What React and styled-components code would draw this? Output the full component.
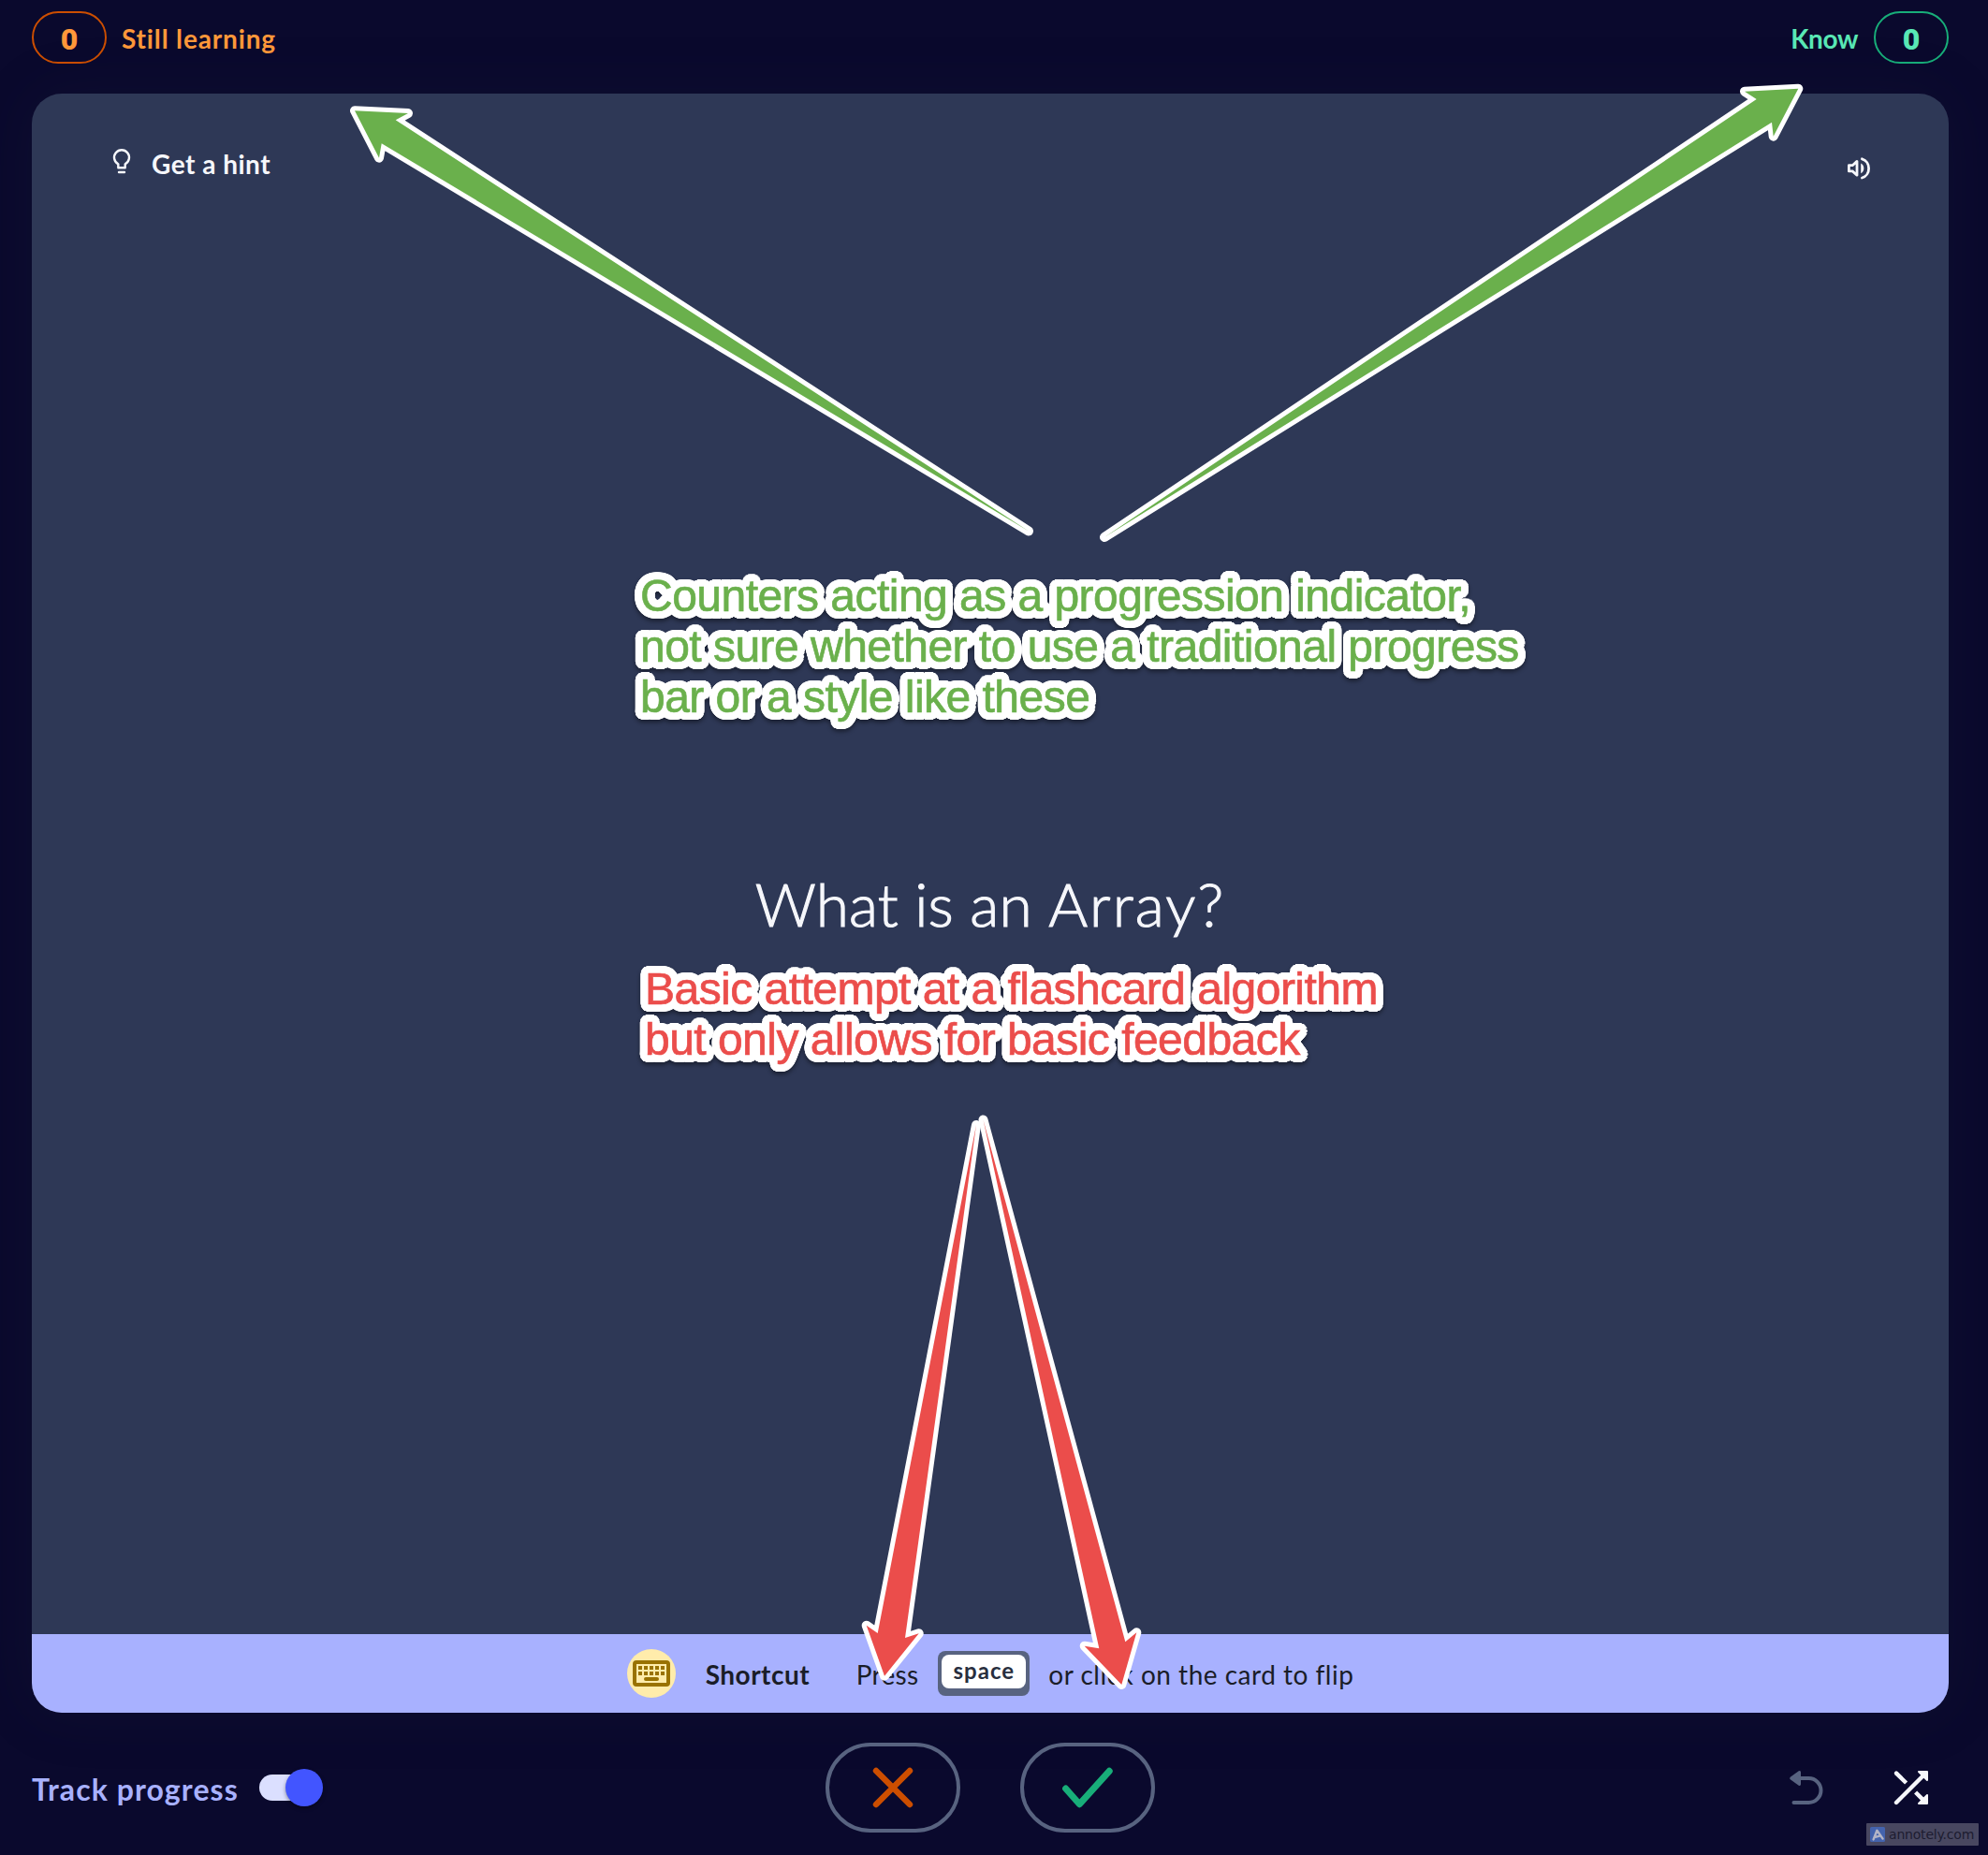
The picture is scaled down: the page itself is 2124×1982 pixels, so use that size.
import React from "react";
import styled, { createGlobalStyle } from "styled-components";

const color = {
  page: "#0a092d",
  card: "#2e3856",
  bar: "#a8b1ff",
  ink: "#1a1d28",
  white: "#f6f7fb",
  gray: "#586380",
  orange: "#ff983a",
  orangeDark: "#cc4e00",
  mint: "#59e8b5",
  green: "#18ae79",
  indigo: "#4255ff",
  markGreen: "#6ab04c",
  markRed: "#eb4d4b",
};

const ring = (radius, steps) =>
  Array.from({ length: steps }, (_, i) => {
    const a = (i / steps) * Math.PI * 2;
    return `${(Math.cos(a) * radius).toFixed(2)}px ${(Math.sin(a) * radius).toFixed(2)}px 0 #fff`;
  }).join(", ");

const noteOutline = `${ring(8.4, 40)}, ${ring(5, 16)}, ${ring(2.5, 8)}`;

const GlobalStyle = createGlobalStyle`
  *, *::before, *::after { box-sizing: border-box; }
  body {
    margin: 0;
    background: ${color.page};
    font-family: Lato, "Open Sans", sans-serif;
    font-variant-ligatures: none;
  }
  button {
    margin: 0;
    padding: 0;
    border: 0;
    background: none;
    color: inherit;
    font: inherit;
  }
`;

const Page = styled.div`
  position: relative;
  display: flex;
  flex-direction: column;
  width: 2124px;
  height: 1982px;
  padding: 0 42px 0 34px;
  overflow: hidden;
  background: ${color.page};
`;

const Header = styled.header`
  display: flex;
  justify-content: space-between;
  height: 100px;
  padding-top: 12px;
`;

const Counter = styled.div`
  display: flex;
  flex-direction: ${(p) => (p.$reverse ? "row-reverse" : "row")};
  align-items: center;
  gap: ${(p) => (p.$reverse ? 17 : 16)}px;
  height: 56px;
  color: ${(p) => p.$color};
`;

const CounterPill = styled.span`
  display: flex;
  align-items: center;
  justify-content: center;
  width: 80px;
  height: 56px;
  padding-top: 3px;
  border: 2px solid ${(p) => p.$border};
  border-radius: 28px;
  font-family: Roboto, sans-serif;
  font-size: 32px;
  font-weight: 900;
`;

const CounterLabel = styled.span`
  padding-top: 2px;
  font-size: 28px;
  font-weight: 700;
  letter-spacing: ${(p) => p.$tracking}px;
`;

const Card = styled.main`
  display: flex;
  flex-direction: column;
  width: 2048px;
  height: 1730px;
  border-radius: 32px;
  overflow: hidden;
  background: ${color.card};
  box-shadow: 0 0 64px rgba(40, 46, 62, 0.16);
`;

const CardTools = styled.div`
  display: flex;
  justify-content: space-between;
  height: 92px;
  padding: 56px 84px 0 84px;
  color: ${color.white};
`;

const HintButton = styled.button`
  display: flex;
  align-items: center;
  gap: 20px;
  height: 36px;
`;

const HintLabel = styled.span`
  padding-top: 2px;
  font-size: 28px;
  font-weight: 700;
  letter-spacing: 0.5px;
`;

const AudioButton = styled.button`
  display: flex;
  align-items: center;
  height: 48px;
`;

const Question = styled.h1`
  display: flex;
  flex: 1;
  align-items: center;
  justify-content: center;
  margin: 0;
  padding-bottom: 8px;
  color: ${color.white};
  font-size: 64px;
  font-weight: 300;
  letter-spacing: 0.1px;
  white-space: pre;
  -webkit-text-stroke: 1.1px ${color.white};
`;

const Term = styled.span`
  letter-spacing: 2.1px;
`;

const ShortcutBar = styled.div`
  display: flex;
  align-items: center;
  justify-content: center;
  height: 84px;
  background: ${color.bar};
  color: ${color.ink};
  font-size: 28px;
`;

const KeyboardBadge = styled.span`
  display: flex;
  align-items: center;
  justify-content: center;
  width: 52px;
  height: 52px;
  margin-right: 32px;
  border-radius: 50%;
  background: #ffecab;
`;

const ShortcutTitle = styled.strong`
  width: 114px;
  margin-right: 47px;
  padding-top: 2px;
  font-weight: 700;
  letter-spacing: 0.5px;
`;

const ShortcutText = styled.span`
  padding-top: 2px;
  letter-spacing: ${(p) => p.$tracking}px;
  white-space: nowrap;
`;

const KeyCap = styled.kbd`
  display: flex;
  width: 98px;
  height: 48px;
  margin: 0 20px 0 21px;
  padding: 4px 4px 8px;
  border-radius: 8px;
  background: ${color.gray};
  font-family: inherit;
`;

const KeyFace = styled.span`
  display: flex;
  flex: 1;
  align-items: center;
  justify-content: center;
  padding-bottom: 4px;
  border-radius: 8px;
  background: #fff;
  color: #282e3e;
  font-size: 24px;
  font-weight: 700;
  letter-spacing: 1px;
`;

const Footer = styled.footer`
  display: grid;
  grid-template-columns: 1fr auto 1fr;
  align-items: center;
  width: 2048px;
  height: 96px;
  margin-top: 32px;
`;

const Progress = styled.label`
  display: flex;
  align-items: center;
  gap: 22px;
`;

const ProgressLabel = styled.span`
  padding-top: 2px;
  color: ${color.bar};
  font-size: 32px;
  font-weight: 700;
  letter-spacing: 1.08px;
`;

const SwitchTrack = styled.span`
  display: flex;
  align-items: center;
  justify-content: flex-end;
  width: 68px;
  height: 28px;
  border-radius: 14px;
  background: linear-gradient(#dbdfff, #dbdfff) left / 48px 28px no-repeat;
`;

const SwitchKnob = styled.span`
  width: 40px;
  height: 40px;
  border-radius: 50%;
  background: ${color.indigo};
  box-shadow: 0 2px 4px rgba(0, 0, 0, 0.4);
`;

const Answers = styled.div`
  display: flex;
  gap: 64px;
`;

const AnswerButton = styled.button`
  display: flex;
  align-items: center;
  justify-content: center;
  width: 144px;
  height: 96px;
  border: 4px solid ${color.gray};
  border-radius: 48px;
`;

const Actions = styled.div`
  display: flex;
  justify-content: flex-end;
  gap: 72px;
  padding-right: 20px;
`;

const ActionButton = styled.button`
  display: flex;
  width: 40px;
  height: 40px;
  color: ${(p) => p.$color};
`;

const Markup = styled.svg`
  position: absolute;
  inset: 0;
  pointer-events: none;
`;

const Note = styled.p`
  position: absolute;
  left: ${(p) => p.$x}px;
  top: ${(p) => p.$y}px;
  margin: 0;
  color: ${(p) => p.$color};
  font: 400 48px/54px "Liberation Sans", Arial, sans-serif;
  letter-spacing: -0.53px;
  white-space: pre;
  -webkit-text-stroke: 0.7px ${(p) => p.$color};
  text-shadow: ${noteOutline};
  filter: drop-shadow(0 3px 2px rgba(0, 0, 0, 0.4));
`;

const Watermark = styled.div`
  position: absolute;
  left: 1994px;
  top: 1948px;
  display: flex;
  align-items: center;
  gap: 4px;
  width: 120px;
  height: 24px;
  padding-left: 4px;
  border-radius: 1px;
  background: #484760;
  color: #1d1c30;
  font: 400 14px/24px "DejaVu Sans", Verdana, sans-serif;
  letter-spacing: -0.2px;
`;

const BulbIcon = () => (
  <svg width="24" height="32" viewBox="0 0 24 32" fill="none" stroke="currentColor" strokeWidth="2.4">
    <path d="M8.3 21.2V17.3A8 8 0 1 1 15.7 17.3V21.2Z" strokeLinejoin="round" />
    <path d="M9 26H15" strokeLinecap="round" />
  </svg>
);

const SpeakerIcon = () => (
  <svg width="26" height="26" viewBox="0 0 26 26" fill="none" stroke="currentColor" strokeWidth="2.8">
    <path d="M3.4 9.7H7.2L12 5.4V20.2L7.2 15.9H3.4Z" strokeLinejoin="round" />
    <path d="M16.2 7.4C20.4 9.6 20.4 16.2 16.2 18.2Z" fill="currentColor" stroke="none" />
    <path d="M17.4 2.8C27 5.6 27 20.2 17.4 23" strokeLinecap="round" />
  </svg>
);

const KeyboardIcon = () => (
  <svg width="40" height="28" viewBox="0 0 40 28" fill="#997200">
    <rect x="2" y="2" width="36" height="24" rx="2" fill="none" stroke="#997200" strokeWidth="4" />
    {[6, 12, 18, 24, 30].map((x) => (
      <React.Fragment key={x}>
        <rect x={x} y="6" width="4" height="4" />
        <rect x={x} y="12" width="4" height="4" />
      </React.Fragment>
    ))}
    <rect x="12" y="18" width="16" height="4" rx="2" />
  </svg>
);

const CrossIcon = () => (
  <svg width="56" height="56" viewBox="0 0 56 56" fill="none" stroke={color.orangeDark} strokeWidth="6.4" strokeLinecap="round">
    <path d="M10 10L46 46M46 10L10 46" />
  </svg>
);

const CheckIcon = () => (
  <svg width="56" height="56" viewBox="0 0 56 56" fill="none" stroke={color.green} strokeWidth="7" strokeLinecap="round" strokeLinejoin="round">
    <path d="M4.6 29L19.4 45.7L51.2 10.3" />
  </svg>
);

const UndoIcon = () => (
  <svg width="40" height="40" viewBox="0 0 40 40" fill="none" stroke="currentColor" strokeWidth="4" strokeLinecap="round" strokeLinejoin="round">
    <path d="M12 10H22.5A13 13 0 0 1 22.5 36H6.5" />
    <path d="M3.6 10L12.6 3.4V16.6Z" fill="currentColor" strokeWidth="2.8" />
  </svg>
);

const ShuffleIcon = () => (
  <svg width="40" height="40" viewBox="0 0 40 40" fill="none" stroke="currentColor" strokeWidth="4.4" strokeLinejoin="round">
    <path d="M4 36L33 7" strokeLinecap="round" />
    <path d="M4 4.6L4.2 4.8" strokeLinecap="round" />
    <path d="M4 4.6L14.6 15M24.6 25L33 33.4" />
    <path d="M28 3H37V12ZM37 28V37H28Z" fill="currentColor" strokeWidth="2" />
  </svg>
);

const LetterMark = () => (
  <svg width="16" height="16" viewBox="0 0 16 16" fill="none">
    <rect width="16" height="16" rx="1.5" fill="#4463ad" />
    <path d="M3.6 13.4L7.4 3.8L13.6 12.6M5.6 10.8L10.4 9.6" stroke="#b4b5c6" strokeWidth="2.4" strokeLinecap="round" strokeLinejoin="round" />
  </svg>
);

const arrows = [
  { fill: color.markGreen, points: "379,118.3 436,121 422.7,128.3 1099,567.5 407.7,153.3 405,168.7" },
  { fill: color.markGreen, points: "1921.3,94.7 1864,97.7 1876.7,106 1180,574 1893,130.7 1894.7,145.7" },
  { fill: color.markRed, points: "945,1790.7 925.7,1736.7 937.7,1745 1043,1202 967,1750 981.7,1745.3" },
  { fill: color.markRed, points: "1198.3,1800 1158.7,1758.7 1174.3,1761.3 1050.5,1196.5 1202.3,1754.3 1214.3,1744.3" },
];

export default function App() {
  return (
    <Page>
      <GlobalStyle />
      <Header>
        <Counter $color={color.orange}>
          <CounterPill $border={color.orangeDark}>0</CounterPill>
          <CounterLabel $tracking={0.85}>Still learning</CounterLabel>
        </Counter>
        <Counter $color={color.mint} $reverse>
          <CounterPill $border={color.green}>0</CounterPill>
          <CounterLabel $tracking={-0.4}>Know</CounterLabel>
        </Counter>
      </Header>

      <Card>
        <CardTools>
          <HintButton>
            <BulbIcon />
            <HintLabel>Get a hint</HintLabel>
          </HintButton>
          <AudioButton aria-label="Play audio">
            <SpeakerIcon />
          </AudioButton>
        </CardTools>
        <Question>
          {"What is an "}
          <Term>Array?</Term>
        </Question>
        <ShortcutBar>
          <KeyboardBadge>
            <KeyboardIcon />
          </KeyboardBadge>
          <ShortcutTitle>Shortcut</ShortcutTitle>
          <ShortcutText $tracking={0.3}>Press</ShortcutText>
          <KeyCap>
            <KeyFace>space</KeyFace>
          </KeyCap>
          <ShortcutText $tracking={0.5}>or click on the card to flip</ShortcutText>
        </ShortcutBar>
      </Card>

      <Footer>
        <Progress>
          <ProgressLabel>Track progress</ProgressLabel>
          <SwitchTrack>
            <SwitchKnob />
          </SwitchTrack>
        </Progress>
        <Answers>
          <AnswerButton aria-label="Still learning">
            <CrossIcon />
          </AnswerButton>
          <AnswerButton aria-label="Know">
            <CheckIcon />
          </AnswerButton>
        </Answers>
        <Actions>
          <ActionButton $color={color.gray} aria-label="Undo">
            <UndoIcon />
          </ActionButton>
          <ActionButton $color={color.white} aria-label="Shuffle">
            <ShuffleIcon />
          </ActionButton>
        </Actions>
      </Footer>

      <Markup width="2124" height="1982" viewBox="0 0 2124 1982">
        {arrows.map((a) => (
          <g key={a.points} strokeLinejoin="round">
            <polygon points={a.points} fill="#fff" stroke="#fff" strokeWidth="10" />
            <polygon points={a.points} fill={a.fill} />
          </g>
        ))}
      </Markup>
      <Note $x={684} $y={609.5} $color={color.markGreen}>
        {"Counters acting as a progression indicator,\nnot sure whether to use a traditional progress\nbar or a style like these"}
      </Note>
      <Note $x={689} $y={1029.5} $color={color.markRed}>
        {"Basic attempt at a flashcard algorithm\nbut only allows for basic feedback"}
      </Note>
      <Watermark>
        <LetterMark />
        annotely.com
      </Watermark>
    </Page>
  );
}
